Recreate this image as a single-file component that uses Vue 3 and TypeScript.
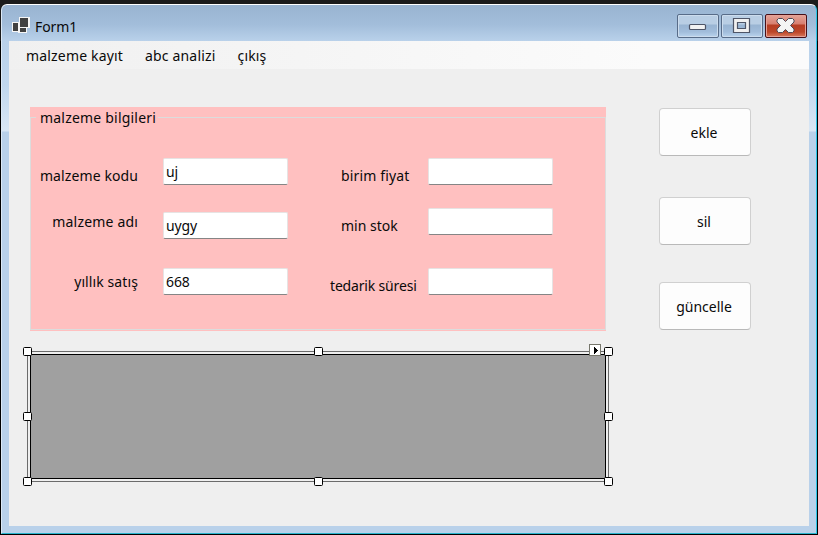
<script setup lang="ts">
interface Field {
  label: string
  value: string
}

const menu: string[] = ['malzeme kayıt', 'abc analizi', 'çıkış']
const leftFields: Field[] = [
  { label: 'malzeme kodu', value: 'uj' },
  { label: 'malzeme adı', value: 'uygy' },
  { label: 'yıllık satış', value: '668' },
]
const rightFields: Field[] = [
  { label: 'birim fiyat', value: '' },
  { label: 'min stok', value: '' },
  { label: 'tedarik süresi', value: '' },
]
const actions: string[] = ['ekle', 'sil', 'güncelle']
const handles: string[] = ['nw', 'n', 'ne', 'w', 'e', 'sw', 's', 'se']
</script>

<template>
  <div class="screen">
    <div class="window">
      <header class="titlebar">
        <svg class="app-icon" width="18" height="17" viewBox="0 0 18 17" shape-rendering="crispEdges">
          <path fill="#f5f5f5" d="M0 5h7V0h11v11h-3v5H6v-1H0z" />
          <path fill="#414141" d="M1 6h5v8H1zM8 1h8v9H8zM8 11h6v4H8z" />
        </svg>
        <span class="title">Form1</span>
        <div class="controls">
          <div class="control">
            <svg width="42" height="24" viewBox="0 0 42 24">
              <rect x="12.5" y="10.5" width="16" height="5" rx="1" fill="#f2f2f2" stroke="#4e5567" stroke-width="1.2" />
            </svg>
          </div>
          <div class="control">
            <svg width="42" height="24" viewBox="0 0 42 24">
              <path fill="#f0f0f0" stroke="#4e5567" stroke-width="1.2" fill-rule="evenodd" d="M12.500 4.500h16v14h-16zM16.500 8.500v6h8v-6z" />
            </svg>
          </div>
          <div class="control close">
            <svg width="42" height="24" viewBox="0 0 42 24">
              <path fill="#f4f4f4" stroke="#4e4a57" stroke-linejoin="round" d="M13.500 4.500h4l3 3 3-3h4l1.500 1.500v2l-3.500 3.500 3.500 3.500v2l-1.500 1.500h-4l-3-3-3 3h-4l-1.500-1.500v-2l3.500-3.500-3.500-3.500v-2z" />
            </svg>
          </div>
        </div>
      </header>
      <main class="client">
        <nav class="menu">
          <span v-for="item in menu" :key="item">{{ item }}</span>
        </nav>
        <div class="body">
          <div class="left">
            <section class="group">
              <div class="frame"><span class="legend">malzeme bilgileri</span></div>
              <div class="fields">
                <div class="labels first">
                  <span v-for="f in leftFields" :key="f.label">{{ f.label }}</span>
                </div>
                <div class="inputs first">
                  <div v-for="f in leftFields" :key="f.label" class="input">{{ f.value }}</div>
                </div>
                <div class="labels second">
                  <span v-for="f in rightFields" :key="f.label">{{ f.label }}</span>
                </div>
                <div class="inputs second">
                  <div v-for="f in rightFields" :key="f.label" class="input">{{ f.value }}</div>
                </div>
              </div>
            </section>
            <div class="selection">
              <div class="datagrid"></div>
              <i v-for="h in handles" :key="h" class="handle" :class="h"></i>
              <svg class="smart-tag" width="12" height="12" viewBox="0 0 12 12" shape-rendering="crispEdges">
                <rect width="12" height="12" fill="#77776c" />
                <rect x="1" y="1" width="10" height="10" fill="#fff" />
                <path fill="#000" d="M5 3h1v1h1v1h1v1h1v1h-1v1h-1v1h-1v1h-1z" />
              </svg>
            </div>
          </div>
          <aside class="actions">
            <div v-for="a in actions" :key="a" class="button">{{ a }}</div>
          </aside>
        </div>
      </main>
    </div>
  </div>
</template>

<style>
body {
  margin: 0;
  overflow: hidden;
}
</style>

<style scoped>
.screen {
  box-sizing: border-box;
  width: 818px;
  height: 535px;
  padding: 4px 1px 1px;
  background: linear-gradient(#1b1b1b 0 41px, #000 41px);
  font-family: "Noto Sans", "Open Sans", sans-serif;
  font-size: 14px;
  line-height: 20px;
  color: #0a0a0a;
  white-space: nowrap;
}
.window {
  box-sizing: border-box;
  height: 530px;
  padding: 0 7px 7px;
  border: 1px solid #fff;
  border-right-color: #2cc5e8;
  border-bottom-color: #28b4cc;
  border-left-color: #dce9f6;
  border-radius: 6px 6px 0 0;
  background: linear-gradient(#99b4d1 0, #a3bedb 20px, #b9d1ea 36px, #c0d7ee 80px, #d9e7f5 126px, #b9d1ea 127px);
}
.titlebar {
  display: flex;
  align-items: flex-start;
  height: 36px;
}
.app-icon {
  margin: 12px 0 0 3px;
}
.title {
  margin: 12px auto 0 5px;
  letter-spacing: -0.1px;
}
.controls {
  display: flex;
  gap: 2px;
  margin: 9px 2px 0 0;
}
.control {
  box-sizing: border-box;
  display: flex;
  justify-content: center;
  align-items: center;
  width: 42px;
  height: 24px;
  border: 1px solid #586c88;
  border-radius: 2px;
  box-shadow: inset 0 0 0 1px #ccdced;
  background: linear-gradient(#b9cee4 0 9px, #98b4d2 10px, #a2bddb 17px, #bad4ed);
}
.control svg {
  flex: none;
}
.close {
  border-color: #471018;
  box-shadow: inset 0 0 0 1px #e5a196;
  background: linear-gradient(#e4a398 0, #d77f70 9px, #b63d23 10px, #bc4629 17px, #d97b5e);
}
.client {
  height: 485px;
  background: #efefef;
}
.menu {
  display: flex;
  gap: 22px;
  box-sizing: border-box;
  height: 28px;
  padding: 5px 0 0 17px;
  letter-spacing: 0.17px;
  background: linear-gradient(90deg, #f0f0f0, #fbfbfb 80%);
}
.body {
  display: flex;
  padding: 38px 0 0 18px;
}
.left {
  width: 582px;
}
.group {
  box-sizing: border-box;
  display: grid;
  width: 576px;
  height: 224px;
  margin-left: 3px;
  padding: 10px 0 1px;
  background: #ffc0c0;
}
.frame,
.fields {
  grid-area: 1 / 1;
}
.frame {
  border: 1px solid #dcdcdc;
}
.legend {
  display: block;
  width: 118px;
  margin: -10px 0 0 5px;
  padding-left: 4px;
  letter-spacing: 0.2px;
  background: #ffc0c0;
}
.fields {
  display: flex;
}
.labels,
.inputs {
  display: flex;
  flex-direction: column;
}
.labels.first {
  width: 108px;
  align-items: flex-end;
  padding-top: 49px;
  letter-spacing: 0.1px;
}
.labels.first span:nth-child(2) {
  margin-top: 26px;
  letter-spacing: 0.18px;
}
.labels.first span:nth-child(3) {
  margin-top: 40px;
}
.labels.second {
  width: 87px;
  margin-left: 42px;
  padding-top: 49px;
  gap: 30px;
}
.labels.second span {
  margin-left: 11px;
}
.labels.second span:first-child {
  letter-spacing: 0.15px;
}
.labels.second span:nth-child(3) {
  margin: 10px 0 0;
  letter-spacing: -0.17px;
}
.inputs {
  width: 125px;
  padding-top: 41px;
}
.inputs.first {
  margin-left: 25px;
}
.inputs.second {
  margin-left: 11px;
}
.input {
  box-sizing: border-box;
  height: 27px;
  padding: 3px 2px 0;
  border: 1px solid #e7e3e3;
  border-bottom-color: #858585;
  border-radius: 2px;
  background: #fff;
  letter-spacing: -0.1px;
}
.inputs.first .input:nth-child(2) {
  margin-top: 27px;
}
.inputs.first .input:nth-child(3) {
  margin-top: 29px;
}
.inputs.second .input:nth-child(2) {
  margin-top: 23px;
}
.inputs.second .input:nth-child(3) {
  margin-top: 33px;
}
.selection {
  position: relative;
  box-sizing: border-box;
  width: 582px;
  height: 131px;
  margin-top: 20px;
  padding: 2px;
  border: 1px solid #6b6b6b;
}
.datagrid {
  box-sizing: border-box;
  height: 125px;
  border: 1px solid #000;
  background: #a0a0a0;
}
.handle {
  position: absolute;
  box-sizing: border-box;
  width: 9px;
  height: 9px;
  border: 1px solid #000;
  border-radius: 1.5px;
  background: #fff;
}
.nw, .n, .ne { top: -5px; }
.w, .e { top: 60px; }
.sw, .s, .se { bottom: -5px; }
.nw, .w, .sw { left: -5px; }
.n, .s { left: 286px; }
.ne, .e, .se { right: -5px; }
.smart-tag {
  position: absolute;
  top: -8px;
  left: 561px;
}
.actions {
  display: flex;
  flex-direction: column;
  width: 92px;
  margin: 1px 0 0 50px;
}
.button {
  box-sizing: border-box;
  height: 48px;
  padding: 14px 2px 0 0;
  border: 1px solid #d0d0d0;
  border-bottom-color: #b9b9b9;
  border-radius: 4px;
  background: #fdfdfd;
  text-align: center;
}
.button:nth-child(2) {
  margin-top: 41px;
}
.button:nth-child(3) {
  margin-top: 37px;
}
</style>
